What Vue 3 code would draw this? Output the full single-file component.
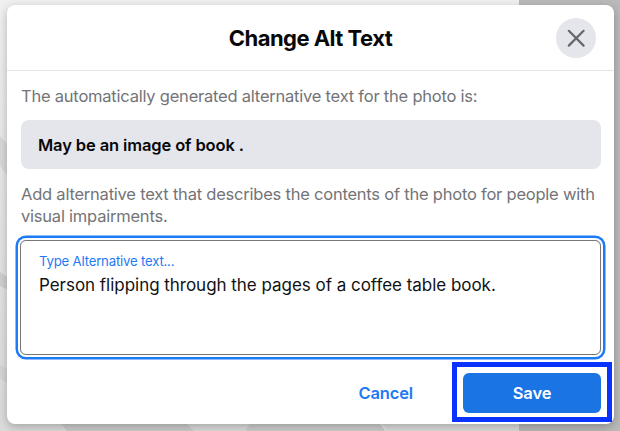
<script setup>
import { ref } from 'vue'

const generatedText = 'May be an image of book .'
const altText = ref('Person flipping through the pages of a coffee table book.')

const cancel = () => {
  altText.value = ''
}

const emit = defineEmits(['save'])
</script>

<template>
  <div class="page">
    <!-- Dimmed photo behind the dialog -->
    <svg class="backdrop" viewBox="0 0 620 431" aria-hidden="true">
      <defs>
        <linearGradient id="photo" x1="0" y1="0" x2="0" y2="1">
          <stop offset="0" stop-color="#f0f0f0" />
          <stop offset="0.45" stop-color="#e6e6e6" />
          <stop offset="1" stop-color="#dcdcdc" />
        </linearGradient>
      </defs>
      <rect width="519" height="431" fill="url(#photo)" />
      <path d="M0 136L12 150V182L0 166Z" fill="#d9d9d9" />
      <path d="M0 272L12 280V292L0 286Z" fill="#cfcfcf" />
      <path d="M0 365L12 372V385L0 379Z" fill="#d5d5d5" />
      <path d="M60 422H185L194 431H67Z" fill="#cdcdcd" />
      <path d="M250 422H378L386 431H246Z" fill="#cecece" />
      <path d="M381 423L386 431" stroke="#eeeeee" />
      <rect x="519" width="101" height="431" fill="#bbbaba" />
    </svg>

    <div class="dialog" role="dialog" aria-labelledby="title">
      <header class="dialog-header">
        <h2 id="title">Change Alt Text</h2>
        <button class="btn-close" type="button" aria-label="Close" @click="cancel">
          <svg width="20" height="20" viewBox="0 0 20 20">
            <path d="M2.8 2.8L17.6 17.6M17.6 2.8L2.8 17.6" />
          </svg>
        </button>
      </header>

      <form class="dialog-body" @submit.prevent="emit('save', altText)">
        <p class="intro">The automatically generated alternative text for the photo is:</p>
        <div class="generated"><span>{{ generatedText }}</span></div>
        <p class="help">
          <span>Add alternative text that describes the contents of the photo for people with</span><br />
          <span>visual impairments.</span>
        </p>

        <label class="field">
          <span class="field-label">Type Alternative text...</span>
          <textarea v-model="altText" rows="2" spellcheck="false"></textarea>
        </label>

        <div class="actions">
          <button class="btn-cancel" type="button" @click="cancel">Cancel</button>
          <div class="highlight">
            <button class="btn-save" type="submit">Save</button>
          </div>
        </div>
      </form>
    </div>
  </div>
</template>

<style>
body {
  margin: 0;
  overflow: hidden;
}
</style>

<style scoped>
.page {
  position: relative;
  box-sizing: border-box;
  width: 620px;
  height: 431px;
  padding: 5px 6px 7px 7px;
  overflow: hidden;
  font-family: Inter, 'Liberation Sans', sans-serif;
}

.backdrop {
  position: absolute;
  top: 0;
  left: 0;
  width: 620px;
  height: 431px;
}

.dialog {
  position: relative;
  height: 419px;
  background: #fff;
  border-radius: 8px;
  box-shadow: 0 3px 10px rgba(0, 0, 0, 0.25);
}

.dialog-header {
  display: grid;
  grid-template-columns: 40px 1fr 40px;
  align-items: center;
  box-sizing: border-box;
  height: 66px;
  padding: 0 18px;
  border-bottom: 1px solid #e2e3e5;
}

.dialog-header h2 {
  grid-column: 2;
  margin: 0;
  font-size: 22px;
  font-weight: 700;
  letter-spacing: -0.53px;
  line-height: 28px;
  text-align: center;
  color: #080809;
}

button {
  padding: 0;
  border: none;
  font-family: inherit;
  cursor: pointer;
}

.btn-close {
  display: flex;
  align-items: center;
  justify-content: center;
  width: 40px;
  height: 40px;
  background: #e4e6eb;
  border-radius: 50%;
}

.btn-close path {
  fill: none;
  stroke: #65676b;
  stroke-width: 2.2;
  stroke-linecap: round;
}

.dialog-body {
  padding: 14px 13px 0 14px;
}

p {
  margin: 0;
  font-size: 16.5px;
  line-height: 22px;
  white-space: nowrap;
  color: #737477;
}

.generated {
  display: flex;
  align-items: center;
  height: 49px;
  margin: 13px 0 14px;
  padding-left: 17px;
  background: #e4e6eb;
  border-radius: 8px;
  font-size: 16.5px;
  font-weight: 600;
  letter-spacing: -0.12px;
  color: #080809;
}

.intro,
.help {
  letter-spacing: -0.22px;
}

.field {
  display: flex;
  flex-direction: column;
  box-sizing: border-box;
  height: 115px;
  margin: 13px 0 0 -1px;
  padding: 11px 18px 0;
  border: 1px solid #777;
  border-radius: 6px;
  box-shadow: 0 0 0 2px #fff, 0 0 0 4.5px #1f7af5;
}

.field-label {
  font-size: 13.2px;
  letter-spacing: -0.2px;
  line-height: 18px;
  color: #1f7af5;
}

textarea {
  height: 60px;
  margin-top: 3px;
  padding: 0;
  border: none;
  outline: none;
  resize: none;
  background: transparent;
  font-family: inherit;
  font-size: 17px;
  letter-spacing: -0.03px;
  line-height: 24px;
  color: #111214;
}

.actions {
  display: flex;
  align-items: center;
  justify-content: flex-end;
  gap: 39px;
  margin: 7px -11px 0 0;
}

.btn-cancel {
  padding-top: 2px;
  background: transparent;
  font-size: 16.5px;
  font-weight: 600;
  letter-spacing: -0.15px;
  line-height: 22px;
  color: #1f7af5;
}

.highlight {
  box-sizing: border-box;
  width: 160px;
  height: 60px;
  padding: 6px;
  border: 5px solid #0a32ff;
}

.btn-save {
  width: 138px;
  height: 40px;
  background: #1b74e4;
  border-radius: 6px;
  font-size: 16.5px;
  font-weight: 600;
  letter-spacing: -0.15px;
  color: #fff;
}
</style>
